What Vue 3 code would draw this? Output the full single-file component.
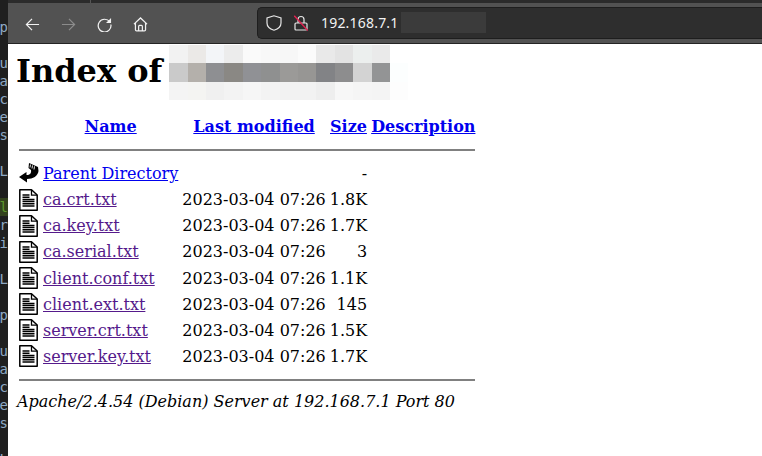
<script setup>
const stripLines = ['', 'op', '', 'ou', 'a', 'c', 're', 'es', '', 'L', '', 'gl', 'r', 'i', '', 'L', '', 'op', '', 'ou', 'a', 'c', 're', 'es', '', 'L'];

const blurRows = [
  ['#f2f2f2', '#ebe9e7', '#f3f5f8', '#ececec', '#fafafa', '#f8f8f8', '#f7f7f7', '#fbfbfb', '#e9e9e9', '#e3e3e3', '#ecefee', '#eaeaea', '#ffffff'],
  ['#cacaca', '#b4b0ab', '#8e8f92', '#8a8884', '#909195', '#8f9090', '#9b9a98', '#979694', '#828386', '#8d8d8e', '#d3d3d3', '#939495', '#fcfefe'],
  ['#f4f4f4', '#f4f4f2', '#f0f0f0', '#f3f3f3', '#f6f6f6', '#f3f3f3', '#f2f2f2', '#f2f2f2', '#eeeeee', '#f7f7f7', '#f5f5f5', '#f4f4f4', '#fdfdfd']
];

const files = [
  { name: 'ca.crt.txt', size: '1.8K' },
  { name: 'ca.key.txt', size: '1.7K' },
  { name: 'ca.serial.txt', size: '3' },
  { name: 'client.conf.txt', size: '1.1K' },
  { name: 'client.ext.txt', size: '145' },
  { name: 'server.crt.txt', size: '1.5K' },
  { name: 'server.key.txt', size: '1.7K' }
];
</script>

<template>
  <div class="screen">
    <aside class="strip">
      <div v-for="(line, i) in stripLines" :key="i" class="strip-line" :class="{ green: line === 'gl' }">{{ line || '\u00a0' }}</div>
    </aside>

    <main class="window">
      <div class="tabbar"><span class="tab-divider"></span></div>

      <header class="toolbar">
        <nav class="nav">
          <svg class="nav-icon" viewBox="0 0 16 16"><path d="M15 8H1.500M7.500 2 1.500 8l6 6" /></svg>
          <svg class="nav-icon dim" viewBox="0 0 16 16"><path d="M1 8h13.500M8.500 2l6 6-6 6" /></svg>
          <svg class="nav-icon" viewBox="0 0 16 16"><path d="M13.600 5.200A6.800 6.800 0 1 0 14.800 8" /><path class="solid" d="M15 1v5.400H9.600z" /></svg>
          <svg class="nav-icon" viewBox="0 0 16 16"><path d="M1 7.600 8 1l7 6.600M2.600 6.400V13.600a1.200 1.200 0 0 0 1.200 1.200h8.400a1.200 1.200 0 0 0 1.200-1.200V6.400M6 14.800V10a1 1 0 0 1 1-1h2a1 1 0 0 1 1 1v4.800" /></svg>
        </nav>
        <div class="urlbar">
          <svg class="shield" viewBox="0 0 16 16"><path d="M8 .8 1 3v5c0 3.600 3 6 7 7.200 4-1.200 7-3.600 7-7.200V3z" /></svg>
          <svg class="lock" viewBox="0 0 14 16"><path d="M4 8V4.500a3 3 0 0 1 6 0V8M2 8h10c.6 0 1 .4 1 1v5c0 .6-.4 1-1 1H2c-.6 0-1-.4-1-1V9c0-.6.4-1 1-1z" /><path class="slash" d="M.3.800 13.700 15.500" /></svg>
          <span class="url">192.168.7.1</span>
          <span class="url-blur"></span>
        </div>
      </header>

      <section class="page">
        <div class="heading">
          <h1>Index of</h1>
          <div class="blur">
            <div v-for="(row, r) in blurRows" :key="r" class="blur-row">
              <span v-for="(c, i) in row" :key="i" :style="{ background: c }"></span>
            </div>
          </div>
        </div>

        <table>
          <thead>
            <tr class="head">
              <th class="c-icon"></th>
              <th class="c-name"><a href="#" class="new">Name</a></th>
              <th class="c-date"><a href="#" class="new">Last modified</a></th>
              <th class="c-size"><a href="#" class="new">Size</a></th>
              <th class="c-desc"><a href="#" class="new">Description</a></th>
            </tr>
            <tr class="rule"><th colspan="5"><hr /></th></tr>
          </thead>
          <tbody>
            <tr class="row">
              <td class="c-icon">
                <svg class="ficon" viewBox="0 0 20 22">
                  <path d="M0 15 7.500 10V13C11 13 12.500 11 12 8L9.500 6 10 1 19 5 19.500 9C19 14 14 17 8 17V20.500z" fill="#000" />
                  <path d="M11.500 2.500 11 5.500M13.500 3.400 13 6.500M15.500 4.300 15 7.500" stroke="#fff" stroke-width=".9" fill="none" />
                </svg>
              </td>
              <td><a href="#" class="new">Parent Directory</a></td>
              <td></td>
              <td class="right">-</td>
              <td></td>
            </tr>
            <tr v-for="file in files" :key="file.name" class="row">
              <td class="c-icon">
                <svg class="ficon" viewBox="0 0 20 22">
                  <path d="M.8.800H12.500L18.200 6V21.200H.8z" fill="#fff" stroke="#000" stroke-width="1.500" stroke-linejoin="round" />
                  <path d="M12.500 1V6.200H18" fill="none" stroke="#000" stroke-width="1.300" />
                  <path d="M3.500 6h7M3.500 8.200h7M3.500 10.400h12M3.500 12.600h12M3.500 14.800h12M3.500 17h12" stroke="#000" stroke-width="1.500" fill="none" />
                </svg>
              </td>
              <td><a href="#" class="seen">{{ file.name }}</a></td>
              <td class="date">2023-03-04 07:26</td>
              <td class="right">{{ file.size }}</td>
              <td></td>
            </tr>
            <tr class="rule"><th colspan="5"><hr class="end" /></th></tr>
          </tbody>
        </table>

        <address>Apache/2.4.54 (Debian) Server at 192.168.7.1 Port 80</address>
      </section>
    </main>
  </div>
</template>

<style>
html, body {
  margin: 0;
  overflow: hidden;
  background: #fff;
}
</style>

<style scoped>
.screen {
  display: flex;
  width: 762px;
  height: 456px;
  overflow: hidden;
}
.strip {
  width: 8px;
  flex: none;
  background: #1f1f1f;
  overflow: hidden;
  color: #8fa9c4;
  font: 14px/18px "DejaVu Sans Mono", monospace;
  direction: rtl;
  text-align: left;
}
.strip-line {
  white-space: nowrap;
  height: 18px;
}
.strip-line.green {
  color: #5d9a2a;
  background: #33421d;
}
.window {
  flex: 1;
  min-width: 0;
  display: flex;
  flex-direction: column;
}
.tabbar {
  height: 3px;
  background: #2b2b2b;
  flex: none;
  position: relative;
}
.tab-divider {
  position: absolute;
  left: 82px;
  top: 0;
  width: 1px;
  height: 3px;
  background: #555;
}
.toolbar {
  height: 40px;
  flex: none;
  background: #525252;
  border-bottom: 1px solid #242424;
  display: flex;
  align-items: center;
}
.nav {
  display: flex;
  align-items: center;
  gap: 21px;
  padding-left: 17px;
  padding-top: 2px;
  width: 249px;
  box-sizing: border-box;
}
.nav-icon {
  width: 15px;
  height: 15px;
  flex: none;
}
.nav-icon path {
  fill: none;
  stroke: #f2f2f2;
  stroke-width: 1.300;
}
.nav-icon path.solid {
  fill: #f2f2f2;
  stroke: none;
}
.nav-icon.dim path {
  stroke: #8c8c8c;
}
.urlbar {
  flex: 1;
  height: 32px;
  box-sizing: border-box;
  background: #2e2e2e;
  border: 1px solid #1e1e1e;
  border-right: none;
  border-radius: 5px 0 0 5px;
  display: flex;
  align-items: center;
  padding-left: 8px;
  margin-top: -1px;
}
.shield {
  width: 16px;
  height: 16px;
  fill: none;
  stroke: #e6e6e6;
  stroke-width: 1.200;
  flex: none;
}
.lock {
  width: 14px;
  height: 16px;
  margin-left: 12px;
  flex: none;
}
.lock path {
  fill: none;
  stroke: #e6e6e6;
  stroke-width: 1.200;
}
.lock path.slash {
  stroke: #e0204f;
  stroke-width: 1.300;
}
.url {
  margin-left: 13px;
  color: #f2f2f2;
  font: 14px "Noto Sans", sans-serif;
  letter-spacing: .2px;
}
.url-blur {
  width: 85px;
  height: 21px;
  background: #3b3b3b;
  margin-left: 2px;
}
.page {
  flex: 1;
  background: #fff;
  color: #000;
  padding: 0 8px;
  font: 16px "DejaVu Serif", serif;
}
.heading {
  display: flex;
  align-items: center;
  height: 54px;
  padding-top: 2px;
  margin-bottom: 15px;
}
h1 {
  margin: -4px 0 0;
  font: bold 32px "DejaVu Serif", serif;
}
.blur {
  margin-left: 7px;
  margin-top: -1px;
}
.blur-row {
  display: flex;
  height: 18.300px;
}
.blur-row span {
  width: 18.400px;
}
table {
  border-collapse: separate;
  border-spacing: 2px 0;
}
th, td {
  padding: 0 1px;
}
.head th {
  height: 23px;
}
.rule th {
  padding: 0 1px;
}
.row td {
  height: 26.150px;
}
hr {
  margin: 11px 0 9.400px;
  border: none;
  border-top: 2px solid #808080;
}
hr.end {
  margin: 9.600px 0 9px;
}
.c-icon {
  width: 20px;
  text-align: left;
}
.ficon {
  display: block;
  width: 20px;
  height: 22px;
}
.right {
  text-align: right;
}
a {
  text-decoration: underline;
}
a.new {
  color: #0000ee;
}
a.seen {
  color: #551a8b;
}
address {
  font-style: italic;
  margin: 2px 0 0 1px;
}
</style>
